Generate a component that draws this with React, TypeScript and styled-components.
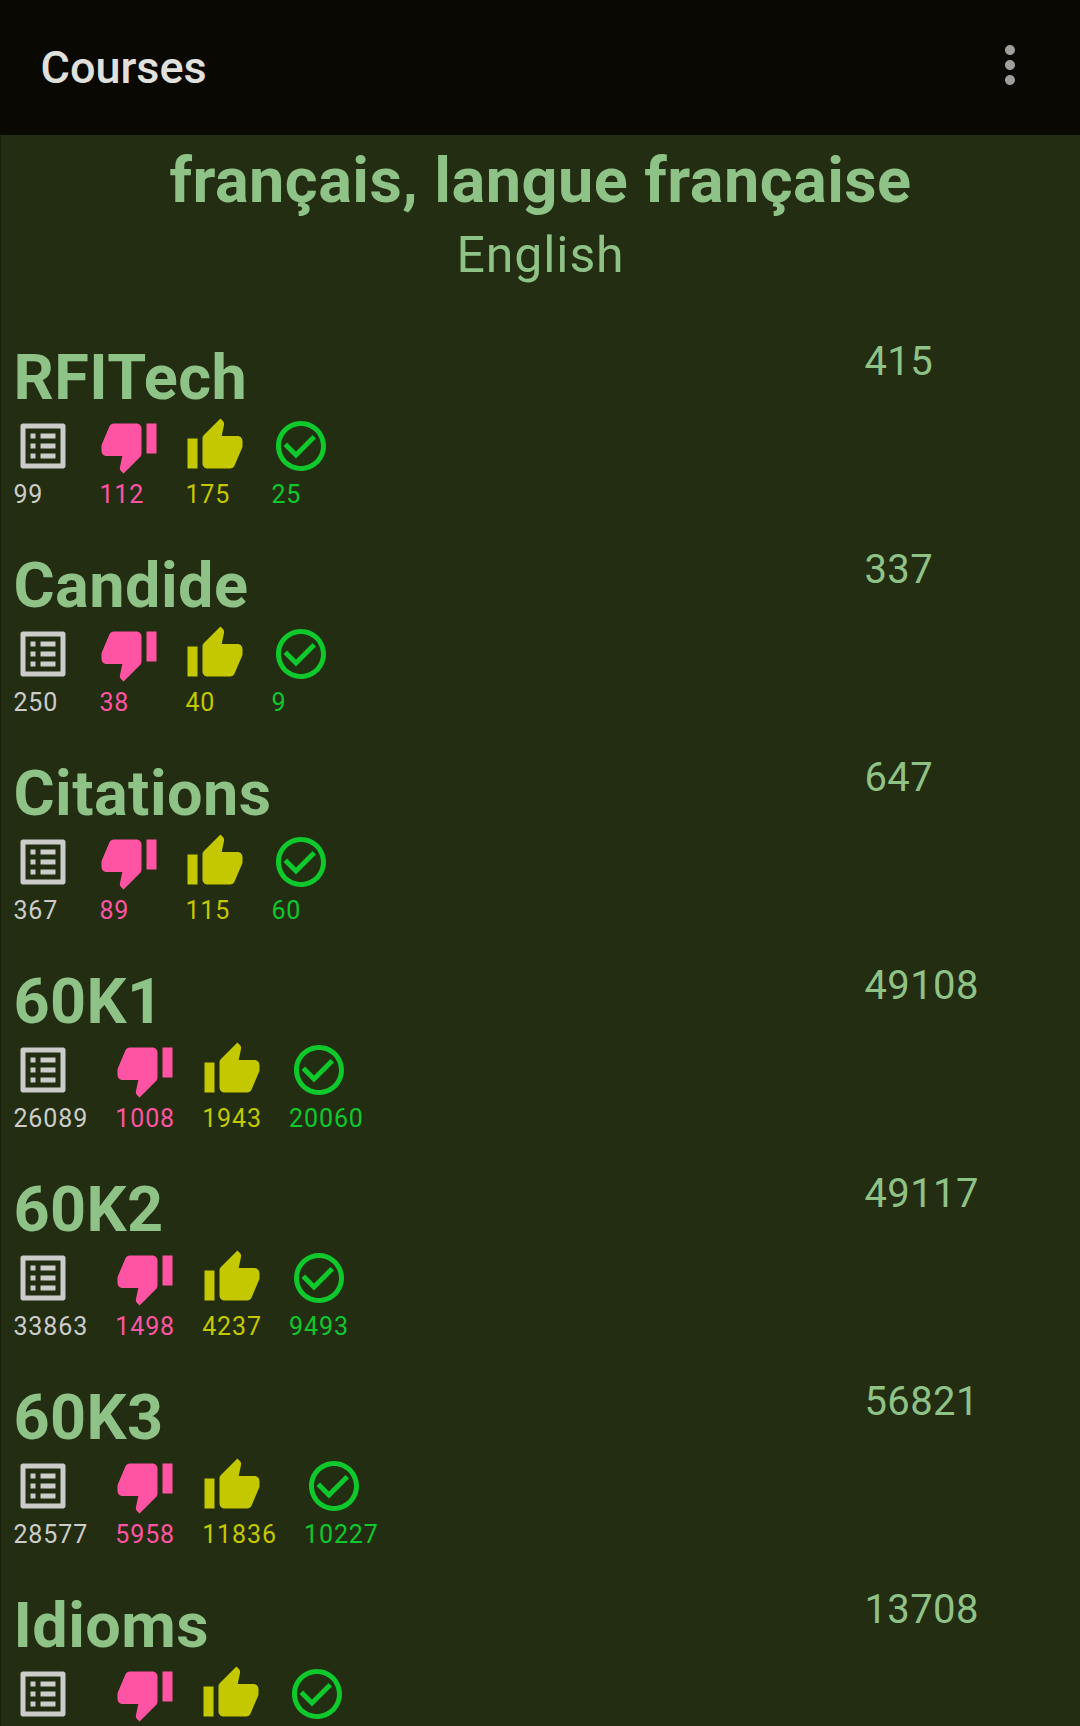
import React from "react";
import styled, { createGlobalStyle } from "styled-components";

const GlobalStyle = createGlobalStyle`
  html, body { margin: 0; background: #222d12; }
  body { overflow: hidden; }
`;

const Screen = styled.div`
  box-sizing: border-box;
  width: 1080px;
  height: 1726px;
  overflow: hidden;
  background: #222d12;
  box-shadow: inset 1px 0 0 #182009;
  color: #8fc287;
  font-family: Roboto, "Liberation Sans", sans-serif;
`;

const AppBar = styled.header`
  box-sizing: border-box;
  height: 135px;
  padding: 0 40px 0 40.5px;
  display: flex;
  align-items: center;
  justify-content: space-between;
  background: #090802;
`;

const AppTitle = styled.h1`
  margin: 0;
  font-size: 45px;
  line-height: 52px;
  font-weight: 500;
  color: #e0e0dd;
`;

const MenuButton = styled.button`
  width: 60px;
  height: 60px;
  margin: 0 0 5px;
  padding: 0;
  border: 0;
  background: none;
  color: #a09f9c;
`;

const Heading = styled.section`
  display: flex;
  flex-direction: column;
  align-items: center;
  height: 205px;
  padding: 8px 0 0 1px;
  box-sizing: border-box;
`;

const Language = styled.h2`
  margin: 0;
  font-size: 63px;
  line-height: 76px;
  font-weight: 700;
  letter-spacing: 0.46px;
`;

const Translation = styled.div`
  font-size: 50px;
  line-height: 72px;
  letter-spacing: 0.9px;
`;

const CourseRow = styled.article`
  display: grid;
  grid-template-columns: 851px 1fr;
  align-items: start;
  height: 208px;
  padding-left: 13.4px;
`;

const CourseName = styled.h3`
  margin: 0;
  font-size: 63px;
  line-height: 76px;
  font-weight: 700;
  letter-spacing: 0.45px;
`;

const Total = styled.div`
  font-size: 40px;
  line-height: 44px;
  letter-spacing: 0.4px;
`;

const Stats = styled.div`
  display: flex;
  gap: 26px;
`;

const Stat = styled.div<{ $color: string; $min?: number }>`
  min-width: ${(p) => p.$min ?? 60}px;
  color: ${(p) => p.$color};
`;

const Icon = styled.svg`
  display: block;
  width: 60px;
  height: 60px;
  fill: currentColor;
`;

const Count = styled.div`
  margin-top: 4px;
  padding-right: 1.1px;
  font-size: 25px;
  line-height: 29px;
  letter-spacing: 0.9px;
`;

const stats = [
  {
    color: "#cccdca",
    path: "M19 5v14H5V5h14m1.1-2H3.9c-.5 0-.9.4-.9.9v16.2c0 .4.4.9.9.9h16.2c.4 0 .9-.5.9-.9V3.9c0-.5-.5-.9-.9-.9zM11 7h6v2h-6V7zm0 4h6v2h-6v-2zm0 4h6v2h-6zM7 7h2v2H7zm0 4h2v2H7zm0 4h2v2H7z",
  },
  {
    color: "#ff53a3",
    path: "M15 3H6c-.83 0-1.54.5-1.84 1.22l-3.02 7.05c-.09.23-.14.47-.14.73v2c0 1.1.9 2 2 2h6.31l-.95 4.57-.03.32c0 .41.17.79.44 1.06L9.83 23l6.59-6.59c.36-.36.58-.86.58-1.41V5c0-1.1-.9-2-2-2zm4 0v12h4V3h-4z",
  },
  {
    color: "#c3c800",
    path: "M1 21h4V9H1v12zm22-11c0-1.1-.9-2-2-2h-6.31l.95-4.57.03-.32c0-.41-.17-.79-.44-1.06L14.17 1 7.59 7.59C7.22 7.95 7 8.45 7 9v10c0 1.1.9 2 2 2h9c.83 0 1.54-.5 1.84-1.22l3.02-7.05c.09-.23.14-.47.14-.73v-2z",
  },
  {
    color: "#0fc82b",
    path: "M16.59 7.58L10 14.17l-3.59-3.58L5 12l5 5 8-8zM12 2C6.48 2 2 6.48 2 12s4.48 10 10 10 10-4.48 10-10S17.52 2 12 2zm0 18c-4.42 0-8-3.58-8-8s3.58-8 8-8 8 3.58 8 8-3.58 8-8 8z",
  },
];

interface Course {
  name: string;
  total: number;
  counts?: number[];
  widths?: number[];
}

const courses: Course[] = [
  { name: "RFITech", total: 415, counts: [99, 112, 175, 25] },
  { name: "Candide", total: 337, counts: [250, 38, 40, 9] },
  { name: "Citations", total: 647, counts: [367, 89, 115, 60] },
  { name: "60K1", total: 49108, counts: [26089, 1008, 1943, 20060] },
  { name: "60K2", total: 49117, counts: [33863, 1498, 4237, 9493] },
  { name: "60K3", total: 56821, counts: [28577, 5958, 11836, 10227] },
  { name: "Idioms", total: 13708, widths: [75.8, 60, 60, 60] },
];

export default function App() {
  return (
    <Screen>
      <GlobalStyle />
      <AppBar>
        <AppTitle>Courses</AppTitle>
        <MenuButton>
          <Icon viewBox="0 0 24 24">
            <path d="M12 8c1.1 0 2-.9 2-2s-.9-2-2-2-2 .9-2 2 .9 2 2 2zm0 2c-1.1 0-2 .9-2 2s.9 2 2 2 2-.9 2-2-.9-2-2-2zm0 6c-1.1 0-2 .9-2 2s.9 2 2 2 2-.9 2-2-.9-2-2-2z" />
          </Icon>
        </MenuButton>
      </AppBar>
      <Heading>
        <Language>français, langue française</Language>
        <Translation>English</Translation>
      </Heading>
      {courses.map((course) => (
        <CourseRow key={course.name}>
          <div>
            <CourseName>{course.name}</CourseName>
            <Stats>
              {stats.map((stat, i) => (
                <Stat key={stat.color} $color={stat.color} $min={course.widths?.[i]}>
                  <Icon viewBox="0 0 24 24">
                    <path d={stat.path} />
                  </Icon>
                  {course.counts && <Count>{course.counts[i]}</Count>}
                </Stat>
              ))}
            </Stats>
          </div>
          <Total>{course.total}</Total>
        </CourseRow>
      ))}
    </Screen>
  );
}
